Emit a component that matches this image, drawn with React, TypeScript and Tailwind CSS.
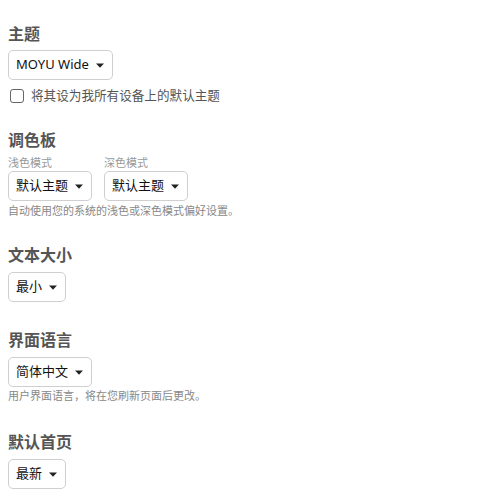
import { ReactNode } from "react";

const font = { fontFamily: '"Noto Sans", "Noto Sans CJK SC", sans-serif' };

function Caret() {
  return (
    <svg width="8" height="5" viewBox="0 0 8 5" className="ml-[7px] shrink-0">
      <path d="M0 0.5 L8 0.5 L4 4.8 Z" fill="#222" />
    </svg>
  );
}

function Select({ label }: { label: string }) {
  return (
    <div className="inline-flex h-[30px] items-center self-start rounded-[5px] border border-[#cfcfcf] bg-white pl-[7px] pr-[8px] text-[13px] font-normal text-[#111]">
      <span>{label}</span>
      <Caret />
    </div>
  );
}

function Heading({ children, className }: { children: ReactNode; className?: string }) {
  return (
    <h2 className={`text-[16px] font-bold leading-[24px] text-[#555] ${className ?? ""}`}>
      {children}
    </h2>
  );
}

export default function App() {
  return (
    <div className="flex min-h-[500px] flex-col bg-white pl-[8px] pt-[22px]" style={font}>
      <Heading className="mb-[4px]">主题</Heading>
      <Select label="MOYU Wide" />
      <label className="mt-[6px] flex h-[20px] items-center gap-[7px] text-[12.6px] text-[#555]">
        <span className="ml-[2px] h-[14px] w-[14px] rounded-[3px] border border-[#666] bg-white" />
        将其设为我所有设备上的默认主题
      </label>

      <Heading className="mt-[22px]">调色板</Heading>
      <div className="mt-[3px] flex gap-[12px]">
        <div className="flex flex-col">
          <span className="text-[11px] leading-[16px] text-[#999]">浅色模式</span>
          <Select label="默认主题" />
        </div>
        <div className="flex flex-col">
          <span className="text-[11px] leading-[16px] text-[#999]">深色模式</span>
          <Select label="默认主题" />
        </div>
      </div>
      <p className="mt-[2px] text-[11px] leading-[16px] text-[#888]">
        自动使用您的系统的浅色或深色模式偏好设置。
      </p>

      <Heading className="mt-[24px] mb-[5px]">文本大小</Heading>
      <Select label="最小" />

      <Heading className="mt-[26px] mb-[5px]">界面语言</Heading>
      <Select label="简体中文" />
      <p className="mt-[1px] text-[11px] leading-[16px] text-[#888]">
        用户界面语言，将在您刷新页面后更改。
      </p>

      <Heading className="mt-[26px] mb-[5px]">默认首页</Heading>
      <Select label="最新" />
    </div>
  );
}
